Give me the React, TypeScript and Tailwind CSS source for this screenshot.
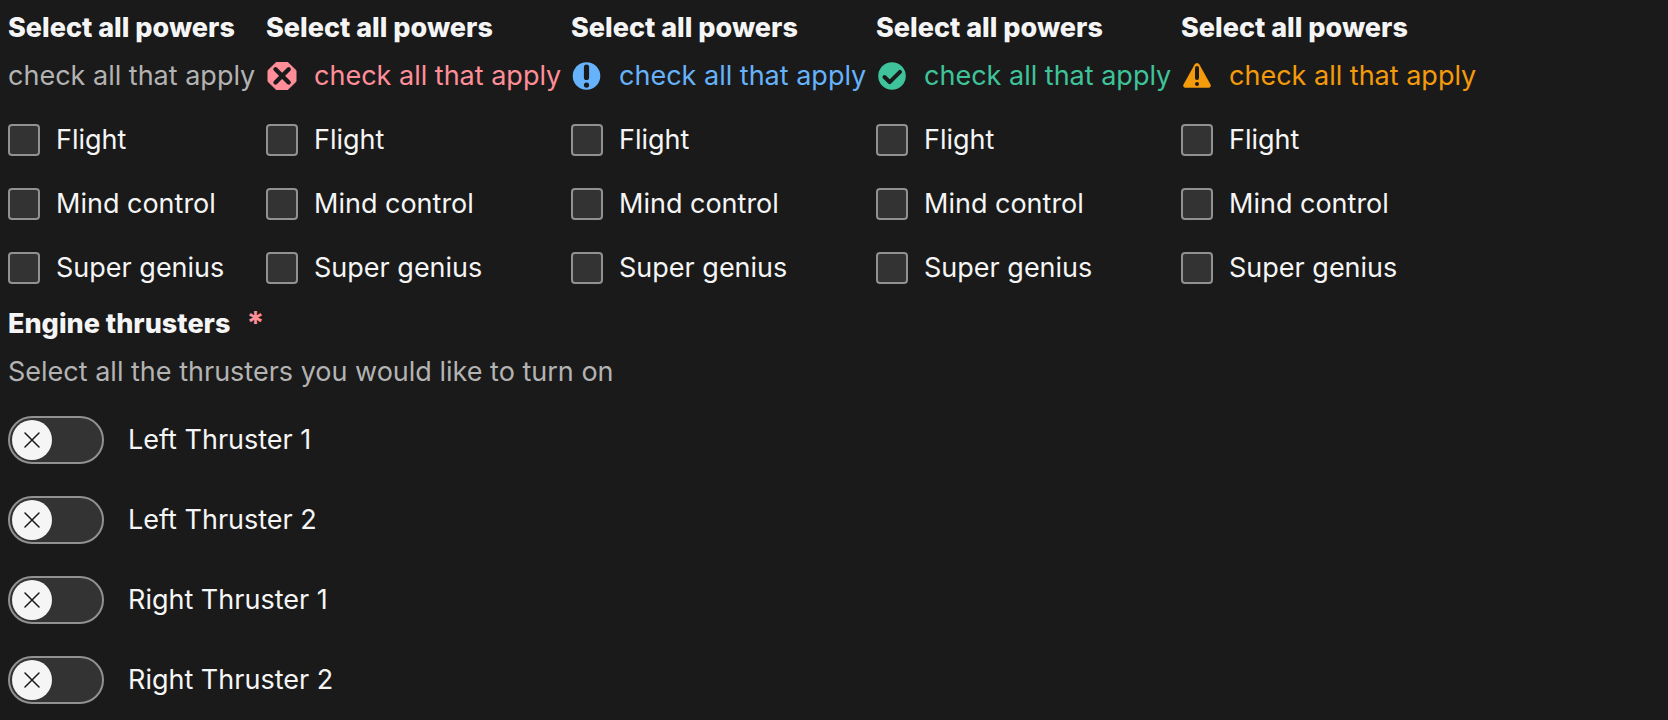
type Variant = 'plain' | 'error' | 'new' | 'success' | 'warning'

const hintColor: Record<Variant, string> = {
  plain: 'text-[#b3b3b3]',
  error: 'text-[#ff8e99]',
  new: 'text-[#66b3fb]',
  success: 'text-[#3ec39a]',
  warning: 'text-[#f49b0b]',
}

const variants: Variant[] = ['plain', 'error', 'new', 'success', 'warning']
const powers = ['Flight', 'Mind control', 'Super genius']
const thrusters = ['Left Thruster 1', 'Left Thruster 2', 'Right Thruster 1', 'Right Thruster 2']

function HintIcon({ variant }: { variant: Variant }) {
  if (variant === 'plain') return null
  return (
    <svg viewBox="0 0 32 32" fill="none" className="mr-4 size-8 shrink-0" aria-hidden="true">
      {variant === 'error' && (
        <>
          <path
            fill="currentColor"
            stroke="currentColor"
            strokeLinejoin="round"
            d="M10.200 2.500h11.600l8.200 8v11l-8.200 8H10.200l-8.200-8v-11z"
          />
          <path stroke="#1a1a1a" strokeWidth="4.400" strokeLinecap="round" d="M9.500 9.300l13.200 13.200M22.700 9.300L9.500 22.500" />
        </>
      )}
      {variant === 'new' && (
        <>
          <circle cx="15.500" cy="16" r="13.800" fill="currentColor" />
          <path stroke="#1a1a1a" strokeWidth="5.200" strokeLinecap="round" d="M15.500 7.200v10.200" />
          <circle cx="15.500" cy="25.100" r="2.600" fill="#1a1a1a" />
        </>
      )}
      {variant === 'success' && (
        <>
          <circle cx="16" cy="16" r="13.800" fill="currentColor" />
          <path
            stroke="#1a1a1a"
            strokeWidth="4"
            strokeLinecap="round"
            strokeLinejoin="round"
            d="M8.500 17l5.200 5.200L24 11.800"
          />
        </>
      )}
      {variant === 'warning' && (
        <>
          <path
            fill="currentColor"
            d="M13.600 4.600Q14.500 3.100 16 3.100t2.400 1.500l11.100 20q.6 1.200 0 2.200t-1.900 1H4.400q-1.300 0-1.900-1t0-2.200z"
          />
          <path stroke="#1a1a1a" strokeWidth="4" strokeLinecap="round" d="M16 8v10" />
          <circle cx="16" cy="23.900" r="2" fill="#1a1a1a" />
        </>
      )}
    </svg>
  )
}

function PowerGroup({ variant }: { variant: Variant }) {
  return (
    <fieldset className={variant === 'plain' ? 'min-w-[250px]' : 'min-w-[297px]'}>
      <legend className="leading-10 font-extrabold">Select all powers</legend>
      <p className={`mt-2 flex h-10 items-center whitespace-nowrap leading-10 ${hintColor[variant]}`}>
        <HintIcon variant={variant} />
        check all that apply
      </p>
      <div className="mt-6 flex flex-col gap-6">
        {powers.map((name) => (
          <label key={name} className="flex h-10 items-center gap-4">
            <input
              type="checkbox"
              className="size-8 shrink-0 appearance-none rounded-sm border-2 border-[#919191] bg-[#333] checked:bg-[#919191]"
            />
            {name}
          </label>
        ))}
      </div>
    </fieldset>
  )
}

function Toggle({ name }: { name: string }) {
  return (
    <label className="flex h-12 items-center gap-6">
      <span className="grid items-center">
        <input
          type="checkbox"
          role="switch"
          className="peer col-start-1 row-start-1 h-12 w-24 appearance-none rounded-full border-2 border-[#919191] bg-[#333]"
        />
        <span className="pointer-events-none col-start-1 row-start-1 ml-1 flex size-10 items-center justify-center rounded-full bg-[#f5f5f5] peer-checked:ml-13">
          <svg viewBox="0 0 16 16" className="size-4" fill="none" aria-hidden="true">
            <path stroke="#1a1a1a" strokeWidth="1.500" strokeLinecap="round" d="M1 1l14 14M15 1L1 15" />
          </svg>
        </span>
      </span>
      {name}
    </label>
  )
}

export default function App() {
  return (
    <main className="min-h-screen bg-[#1a1a1a] p-2 font-[Inter,sans-serif] text-[27px] text-[#f5f5f5]">
      <div className="flex gap-2">
        {variants.map((variant) => (
          <PowerGroup key={variant} variant={variant} />
        ))}
      </div>
      <fieldset className="mt-4">
        <legend className="flex h-10 items-center gap-4 leading-10 font-extrabold">
          Engine thrusters <span className="text-[32px] font-bold text-[#ff8e99]">*</span>
        </legend>
        <p className="mt-2 leading-10 text-[#b3b3b3]">Select all the thrusters you would like to turn on</p>
        <div className="mt-6 flex flex-col gap-8">
          {thrusters.map((name) => (
            <Toggle key={name} name={name} />
          ))}
        </div>
      </fieldset>
    </main>
  )
}
